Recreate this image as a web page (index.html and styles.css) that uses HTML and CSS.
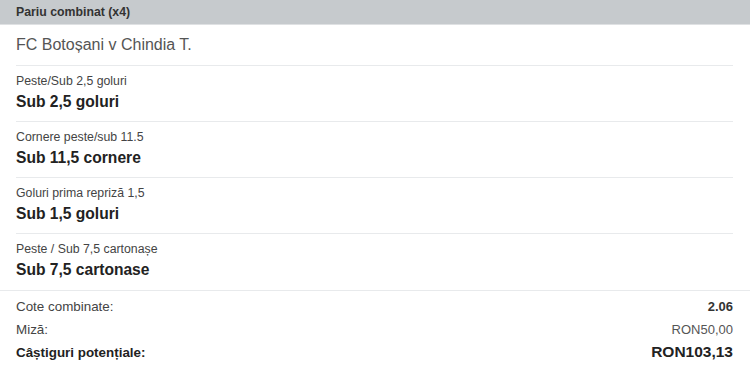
FILE: index.html
```html
<!DOCTYPE html>
<html lang="ro">
<head>
<meta charset="utf-8">
<link rel="stylesheet" href="styles.css">
</head>
<body>
<div class="slip">
  <div class="header">Pariu combinat (x4)</div>
  <div class="match">FC Botoșani v Chindia T.</div>
  <div class="sel">
    <div class="market">Peste/Sub 2,5 goluri</div>
    <div class="pick">Sub 2,5 goluri</div>
  </div>
  <div class="sel">
    <div class="market">Cornere peste/sub 11.5</div>
    <div class="pick">Sub 11,5 cornere</div>
  </div>
  <div class="sel">
    <div class="market">Goluri prima repriză 1,5</div>
    <div class="pick">Sub 1,5 goluri</div>
  </div>
  <div class="sel last">
    <div class="market">Peste / Sub 7,5 cartonașe</div>
    <div class="pick">Sub 7,5 cartonase</div>
  </div>
  <div class="summary">
    <div class="row"><span>Cote combinate:</span><span class="strong">2.06</span></div>
    <div class="row"><span>Miză:</span><span class="muted">RON50,00</span></div>
    <div class="row total"><span>Câștiguri potențiale:</span><span class="big">RON103,13</span></div>
  </div>
</div>
</body>
</html>
```
FILE: styles.css
```css
html, body {
  margin: 0;
  padding: 0;
  background: #fff;
}
body {
  font-family: "Liberation Sans", Arial, sans-serif;
  color: #333;
}
.slip {
  width: 750px;
}
.header {
  height: 25px;
  box-sizing: border-box;
  background: #c6cacd;
  border-bottom: 1px solid #dfe1e3;
  padding: 0 16px;
  font-size: 12.3px;
  font-weight: bold;
  line-height: 24px;
  color: #333;
}
.match {
  margin: 0 17px 0 16px;
  height: 41px;
  box-sizing: border-box;
  border-bottom: 1px solid #e8eaec;
  font-size: 16px;
  line-height: 40px;
  color: #555;
}
.sel {
  margin: 0 17px 0 16px;
  height: 56px;
  box-sizing: border-box;
  border-bottom: 1px solid #e8eaec;
  padding-top: 7px;
}
.sel.last {
  border-bottom: none;
}
.market {
  font-size: 12.3px;
  line-height: 16px;
  color: #444;
}
.pick {
  font-size: 15.6px;
  font-weight: bold;
  line-height: 26px;
  color: #222;
}
.summary {
  border-top: 1px solid #e8eaec;
  padding: 5px 17px 0 16px;
}
.row {
  display: flex;
  justify-content: space-between;
  align-items: baseline;
  font-size: 13.4px;
  line-height: 22.5px;
  color: #444;
}
.strong {
  font-weight: bold;
  font-size: 13px;
  color: #333;
}
.muted {
  font-size: 13px;
  color: #555;
}
.total {
  font-weight: bold;
  color: #222;
}
.big {
  font-size: 15.5px;
}
```
